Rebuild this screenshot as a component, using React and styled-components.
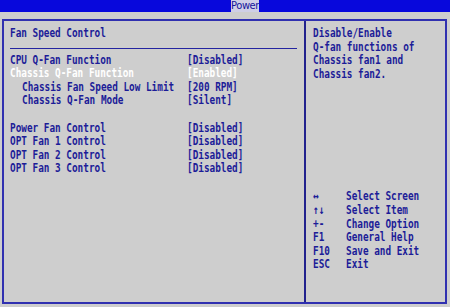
import React from 'react';
import styled, { createGlobalStyle } from 'styled-components';

const GlobalStyle = createGlobalStyle`
  html, body {
    margin: 0;
    padding: 0;
    background: #cecece;
  }
`

const Screen = styled.div`
  width: 450px;
  height: 307px;
  background: #cecece;
  display: flex;
  flex-direction: column;
  font-family: "DejaVu Sans Mono", "Liberation Mono", monospace;
  font-weight: bold;
  font-size: 12px;
  color: #1c1c98;
  overflow: hidden;
`

const TopBar = styled.div`
  height: 12px;
  background: #0808dc;
  display: flex;
  padding-left: 231px;
`

const Tab = styled.div`
  width: 28px;
  height: 12px;
  background: #cfcfe6;
  color: #14149a;
  font-family: "DejaVu Sans Condensed", "DejaVu Sans", sans-serif;
  font-weight: normal;
  font-size: 11px;
  line-height: 12px;
  text-align: center;
  letter-spacing: -0.4px;
`

const Frame = styled.div`
  flex: 1;
  margin: 7px 3px 3px 2px;
  border: 2px solid #3030b0;
  display: grid;
  grid-template-columns: 302px 1fr;
`

const MainPanel = styled.div`
  border-right: 2px solid #22228e;
  padding: 6px 0 0 6px;
`

const SidePanel = styled.div`
  display: flex;
  flex-direction: column;
  justify-content: space-between;
  padding: 6px 0 30px 7px;
`

// narrow BIOS look: squeeze a normal mono glyph horizontally
const Txt = styled.span`
  display: inline-block;
  white-space: pre;
  transform: scaleX(0.78);
  transform-origin: 0 50%;
  color: ${p => (p.$active ? '#ffffff' : 'inherit')};
`

const Line = styled.div`
  height: 13.6px;
  line-height: 13.6px;
`

const Rule = styled.div`
  width: 287px;
  height: 1px;
  background: #2424a0;
  margin: 7px 0 5px;
`

const Row = styled.div`
  height: 13.6px;
  line-height: 13.6px;
  display: grid;
  grid-template-columns: 177px auto;
`

const Label = styled.div`
  padding-left: ${p => (p.$indent ? '12px' : '0')};
`

const Gap = styled.div`
  height: 13.6px;
`

const KeyRow = styled.div`
  height: 13.6px;
  line-height: 13.6px;
  display: grid;
  grid-template-columns: 33px auto;
`

const items = [
  { label: 'CPU Q-Fan Function', value: '[Disabled]' },
  { label: 'Chassis Q-Fan Function', value: '[Enabled]', active: true },
  { label: 'Chassis Fan Speed Low Limit', value: '[200 RPM]', indent: true },
  { label: 'Chassis Q-Fan Mode', value: '[Silent]', indent: true },
  null,
  { label: 'Power Fan Control', value: '[Disabled]' },
  { label: 'OPT Fan 1 Control', value: '[Disabled]' },
  { label: 'OPT Fan 2 Control', value: '[Disabled]' },
  { label: 'OPT Fan 3 Control', value: '[Disabled]' },
]

const help = ['Disable/Enable', 'Q-fan functions of', 'Chassis fan1 and', 'Chassis fan2.']

const keys = [
  ['\u2194', 'Select Screen'],
  ['\u2191\u2193', 'Select Item'],
  ['+-', 'Change Option'],
  ['F1', 'General Help'],
  ['F10', 'Save and Exit'],
  ['ESC', 'Exit'],
]

const App = () => {
  return (
    <Screen>
      <GlobalStyle />
      <TopBar>
        <Tab>Power</Tab>
      </TopBar>
      <Frame>
        <MainPanel>
          <Line><Txt>Fan Speed Control</Txt></Line>
          <Rule />
          {items.map((it, i) =>
            it ? (
              <Row key={i}>
                <Label $indent={it.indent}><Txt $active={it.active}>{it.label}</Txt></Label>
                <div><Txt $active={it.active}>{it.value}</Txt></div>
              </Row>
            ) : (
              <Gap key={i} />
            )
          )}
        </MainPanel>
        <SidePanel>
          <div>
            {help.map(h => (
              <Line key={h}><Txt>{h}</Txt></Line>
            ))}
          </div>
          <div>
            {keys.map(([k, d]) => (
              <KeyRow key={k}>
                <div><Txt>{k}</Txt></div>
                <div><Txt>{d}</Txt></div>
              </KeyRow>
            ))}
          </div>
        </SidePanel>
      </Frame>
    </Screen>
  )
}

export default App
